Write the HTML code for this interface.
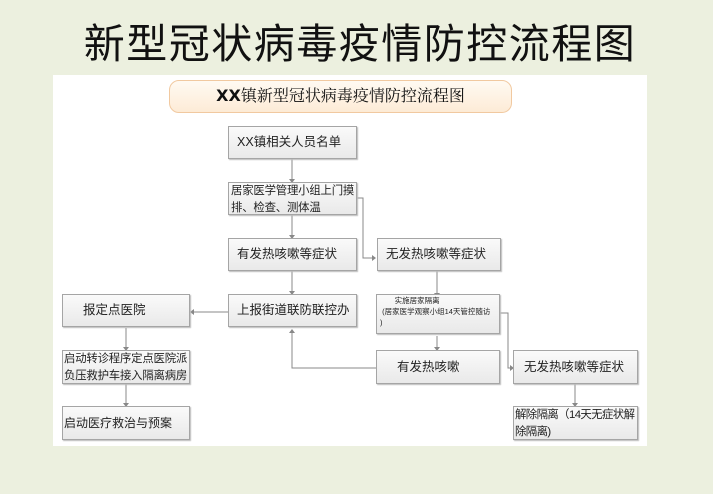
<!DOCTYPE html>
<html><head><meta charset="utf-8"><style>
*{margin:0;padding:0;box-sizing:border-box}
body{width:713px;height:494px;background:#ecf0df;position:relative;overflow:hidden;font-family:"Liberation Sans","Noto Sans CJK SC",sans-serif}
.t{position:absolute;left:56px;top:16px;width:608px;text-align:center;font-size:41px;color:#111;letter-spacing:1.5px;line-height:56px}
.w{position:absolute;left:53px;top:75px;width:594px;height:371px;background:#fff}
.ban{position:absolute;left:169px;top:80px;width:343px;height:33px;background:linear-gradient(#fffaf2,#fdebd6);border:1.5px solid #f1c9a0;border-radius:10px;text-align:center;font-size:16px;line-height:30px;color:#111;font-family:"Liberation Serif","Noto Serif CJK SC",serif}
.b{position:absolute;background:linear-gradient(#fafafa,#e9e9e9);border:1px solid #a5a5a5;box-shadow:1px 1px 1px #bbb;font-size:12px;color:#222;line-height:17px}
.s{font-size:11.4px;line-height:17px;letter-spacing:-0.2px}
svg{position:absolute;left:0;top:0}
</style></head><body>
<div class="t">新型冠状病毒疫情防控流程图</div>
<div class="w"></div>
<div class="ban"><b style="font-family:'DejaVu Sans';font-weight:900">XX</b>镇新型冠状病毒疫情防控流程图</div>
<svg width="713" height="494"><g stroke="#888" fill="none" stroke-width="1">
<path d="M292 159V182M292 215V238M292 271V294M356 198H363V258H374M437 271V296M228 312H192M126 328V350M126 384V406M437 336V350M376 368H292V330M500 313H508V368H511M575 384V406"/></g>
<g fill="#888"><path d="M289 179l3 4 3-4zM289 235l3 4 3-4zM289 291l3 4 3-4zM372 255l4 3-4 3zM434 293l3 4 3-4zM194 309l-4 3 4 3zM123 347l3 4 3-4zM123 403l3 4 3-4zM434 347l3 4 3-4zM289 333l3-4 3 4zM510 365l4 3-4 3zM572 403l3 4 3-4z"/></g></svg>
<div class="b" style="left:228px;top:126px;width:129px;height:33px;padding:7px 0 0 8px;font-size:12.5px">XX镇相关人员名单</div>
<div class="b s" style="left:228px;top:182px;width:129px;height:33px;padding:0 0 0 2px">居家医学管理小组上门摸排、检查、测体温</div>
<div class="b" style="left:228px;top:238px;width:129px;height:33px;padding:7px 0 0 8px;font-size:12.5px">有发热咳嗽等症状</div>
<div class="b" style="left:377px;top:238px;width:124px;height:33px;padding:7px 0 0 8px;font-size:12.5px">无发热咳嗽等症状</div>
<div class="b" style="left:228px;top:294px;width:129px;height:33px;padding:7px 0 0 8px;font-size:12.5px">上报街道联防联控办</div>
<div class="b" style="left:62px;top:294px;width:128px;height:33px;padding:7px 0 0 20px;font-size:12.5px">报定点医院</div>
<div class="b" style="left:376px;top:294px;width:124px;height:40px;padding:0 0 0 3px;font-size:7.5px;line-height:11px">&nbsp;&nbsp;&nbsp;&nbsp;&nbsp;&nbsp;&nbsp;实施居家隔离<br>&nbsp;(居家医学观察小组14天管控随访<br>)</div>
<div class="b s" style="left:62px;top:350px;width:128px;height:34px;padding:0 0 0 1px">启动转诊程序定点医院派负压救护车接入隔离病房</div>
<div class="b" style="left:376px;top:350px;width:124px;height:34px;padding:8px 0 0 20px;font-size:12.5px">有发热咳嗽</div>
<div class="b" style="left:513px;top:350px;width:125px;height:34px;padding:8px 0 0 10px;font-size:12.5px">无发热咳嗽等症状</div>
<div class="b" style="left:62px;top:406px;width:128px;height:34px;padding:8px 0 0 1px;font-size:12px">启动医疗救治与预案</div>
<div class="b s" style="left:513px;top:406px;width:125px;height:34px;padding:0 0 0 1px;letter-spacing:-0.6px">解除隔离（14天无症状解<br>除隔离)</div>
</body></html>
